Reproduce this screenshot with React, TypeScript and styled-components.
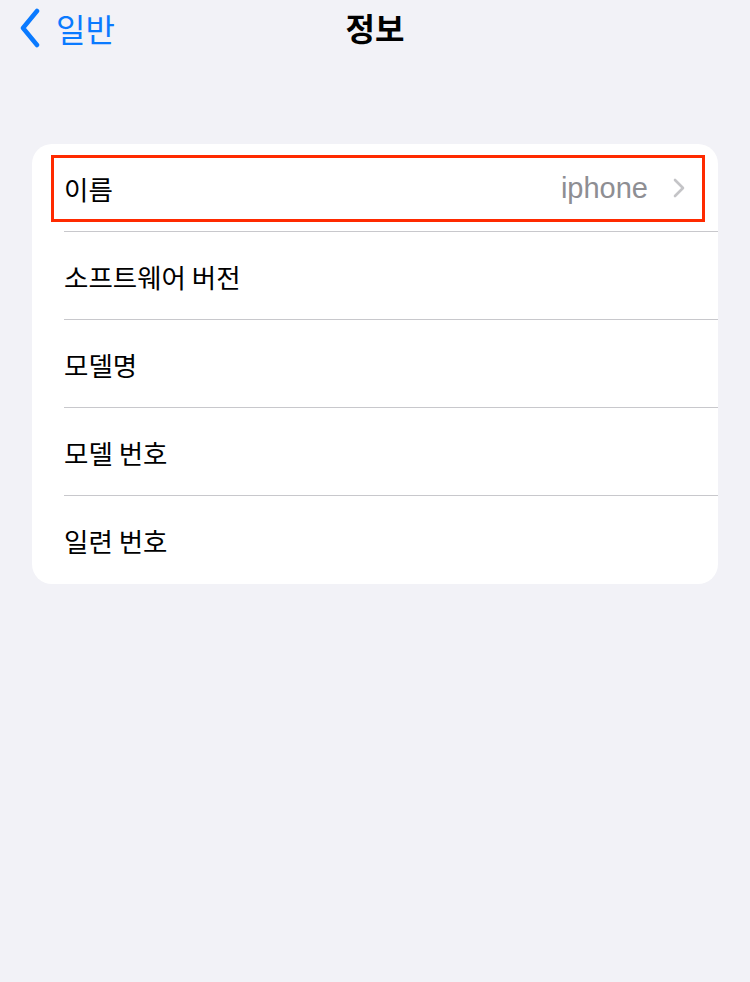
import styled, { createGlobalStyle } from "styled-components"

const Global = createGlobalStyle`
body {
  margin: 0;
  background: #f2f2f7;
  font-family: "Noto Sans CJK KR", "Noto Sans", sans-serif;
}
`

const Page = styled.div`
  width: 750px;
  min-height: 982px;
  background: #f2f2f7;
`

const NavBar = styled.div`
  height: 60px;
  display: flex;
  align-items: center;
  position: relative;
`

const Back = styled.div`
  display: flex;
  align-items: center;
  gap: 14px;
  padding-left: 18px;
  color: #0a7aff;
  font-size: 32px;
  margin-top: -4px;
`

const Title = styled.div`
  position: absolute;
  left: 0;
  right: 0;
  text-align: center;
  font-size: 32px;
  font-weight: 700;
  color: #000;
  pointer-events: none;
  margin-top: -6px;
`

const Card = styled.div`
  margin: 84px 32px 0 32px;
  background: #fff;
  border-radius: 20px;
  overflow: hidden;
`

const Row = styled.div<{ last?: boolean }>`
  height: 88px;
  margin-left: 32px;
  padding-right: 32px;
  display: flex;
  align-items: center;
  border-bottom: ${({ last }) => (last ? "none" : "1px solid #c8c8cc")};
  position: relative;
  box-sizing: border-box;
`

const Label = styled.div`
  font-size: 26.5px;
  color: #000;
  flex: 1;
  padding-top: 1px;
`

const Value = styled.div`
  font-size: 29px;
  color: #8e8e93;
  font-family: "Liberation Sans", "Noto Sans CJK KR", sans-serif;
  margin-right: 24px;
  padding-top: 2px;
`

const Highlight = styled.div`
  position: absolute;
  left: -13px;
  right: 13px;
  top: 11px;
  bottom: 9px;
  border: 3px solid #ff2a00;
  pointer-events: none;
`

const rows = ["소프트웨어 버전", "모델명", "모델 번호", "일련 번호"]

const App = () => {
  return (
    <Page>
      <Global />
      <NavBar>
        <Back>
          <svg width="24" height="40" viewBox="0 0 24 40">
            <path d="M19 3 L5 20 L19 37" fill="none" stroke="#0a7aff" strokeWidth="4.5" strokeLinecap="round" strokeLinejoin="round" />
          </svg>
          일반
        </Back>
        <Title>정보</Title>
      </NavBar>
      <Card>
        <Row>
          <Highlight />
          <Label>이름</Label>
          <Value>iphone</Value>
          <svg width="14" height="22" viewBox="0 0 14 22">
            <path d="M3 3 L11 11 L3 19" fill="none" stroke="#c4c4c7" strokeWidth="2.6" strokeLinecap="round" strokeLinejoin="round" />
          </svg>
        </Row>
        {rows.map((r, i) => (
          <Row key={r} last={i === rows.length - 1}>
            <Label>{r}</Label>
          </Row>
        ))}
      </Card>
    </Page>
  )
}

export default App
